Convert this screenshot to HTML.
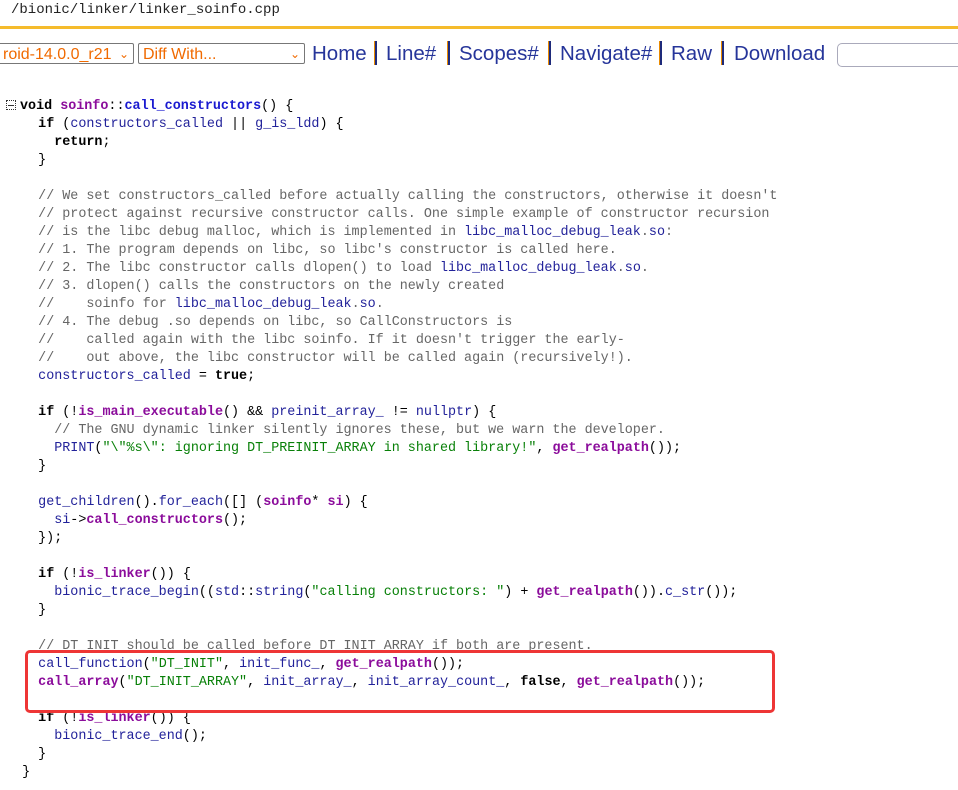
<!DOCTYPE html>
<html><head><meta charset="utf-8"><style>
body{margin:0;background:#fff;width:958px;height:790px;overflow:hidden;position:relative;font-family:"Liberation Sans",sans-serif}
.path{position:absolute;left:11px;top:2px;font:14px "Liberation Mono",monospace;color:#222}
.bar{position:absolute;left:0;right:0;top:26px;height:3px;background:#f5bb2c}
.sel{position:absolute;top:43px;height:21px;border:1px solid #777;border-radius:2px;color:#f06a00;font-size:16px;line-height:21px;box-sizing:border-box;padding-left:4px;background:#fff}
.sel b{position:absolute;right:4px;top:0;font-weight:normal;font-size:12px}
.n{position:absolute;top:42px;font-size:20.5px;color:#26359a;white-space:nowrap}
.sep{position:absolute;top:41px;width:2px;height:24px;background:#1e2a7a;border-left:1px solid #e98a00}
.search{position:absolute;left:837px;top:43px;width:140px;height:22px;border:1px solid #aab;border-radius:5px}
pre{position:absolute;left:6px;top:98px;margin:0;font:13.4px/18px "Liberation Mono",monospace;color:#000}
.i{color:#22229a}.k{font-weight:bold}.f{color:#8b0c9b;font-weight:bold}.c{color:#666}.s{color:#088008}
.fold{display:inline-block;width:10px;height:10px;border:1px dotted #333;position:relative;box-sizing:border-box;margin-right:4px;vertical-align:-1px}
.fold:after{content:"";position:absolute;left:1px;right:1px;top:4px;height:1px;background:#333}
.box{position:absolute;left:25px;top:650px;width:750px;height:63px;border:3px solid #ee3535;border-radius:5px;box-sizing:border-box}
</style></head><body>
<div class="path">/bionic/linker/linker_soinfo.cpp</div>
<div class="bar"></div>
<div class="sel" style="left:-2px;width:136px">roid-14.0.0_r21<b>&#8964;</b></div>
<div class="sel" style="left:138px;width:167px">Diff With...<b>&#8964;</b></div>
<span class="n" style="left:312px">Home</span><span class="sep" style="left:374px"></span>
<span class="n" style="left:386px">Line#</span><span class="sep" style="left:447px"></span>
<span class="n" style="left:459px">Scopes#</span><span class="sep" style="left:548px"></span>
<span class="n" style="left:560px">Navigate#</span><span class="sep" style="left:659px"></span>
<span class="n" style="left:671px">Raw</span><span class="sep" style="left:721px"></span>
<span class="n" style="left:734px">Download</span>
<div class="search"></div>
<pre><span class="fold"></span><span class="k">void</span> <span class="f">soinfo</span>::<span class="i" style="font-weight:bold;color:#1a1ad0">call_constructors</span>() {
    <span class="k">if</span> (<span class="i">constructors_called</span> || <span class="i">g_is_ldd</span>) {
      <span class="k">return</span>;
    }

    <span class="c">// We set constructors_called before actually calling the constructors, otherwise it doesn't</span>
    <span class="c">// protect against recursive constructor calls. One simple example of constructor recursion</span>
    <span class="c">// is the libc debug malloc, which is implemented in </span><span class="i">libc_malloc_debug_leak</span><span class="c">.</span><span class="i">so</span><span class="c">:</span>
    <span class="c">// 1. The program depends on libc, so libc's constructor is called here.</span>
    <span class="c">// 2. The libc constructor calls dlopen() to load </span><span class="i">libc_malloc_debug_leak</span><span class="c">.</span><span class="i">so</span><span class="c">.</span>
    <span class="c">// 3. dlopen() calls the constructors on the newly created</span>
    <span class="c">//    soinfo for </span><span class="i">libc_malloc_debug_leak</span><span class="c">.</span><span class="i">so</span><span class="c">.</span>
    <span class="c">// 4. The debug .so depends on libc, so CallConstructors is</span>
    <span class="c">//    called again with the libc soinfo. If it doesn't trigger the early-</span>
    <span class="c">//    out above, the libc constructor will be called again (recursively!).</span>
    <span class="i">constructors_called</span> = <span class="k">true</span>;

    <span class="k">if</span> (!<span class="f">is_main_executable</span>() &amp;&amp; <span class="i">preinit_array_</span> != <span class="i">nullptr</span>) {
      <span class="c">// The GNU dynamic linker silently ignores these, but we warn the developer.</span>
      <span class="i">PRINT</span>(<span class="s">"\"%s\": ignoring DT_PREINIT_ARRAY in shared library!"</span>, <span class="f">get_realpath</span>());
    }

    <span class="i">get_children</span>().<span class="i">for_each</span>([] (<span class="f">soinfo</span>* <span class="f">si</span>) {
      <span class="i">si</span>-&gt;<span class="f">call_constructors</span>();
    });

    <span class="k">if</span> (!<span class="f">is_linker</span>()) {
      <span class="i">bionic_trace_begin</span>((<span class="i">std</span>::<span class="i">string</span>(<span class="s">"calling constructors: "</span>) + <span class="f">get_realpath</span>()).<span class="i">c_str</span>());
    }

    <span class="c">// DT_INIT should be called before DT_INIT_ARRAY if both are present.</span>
    <span class="i">call_function</span>(<span class="s">"DT_INIT"</span>, <span class="i">init_func_</span>, <span class="f">get_realpath</span>());
    <span class="f">call_array</span>(<span class="s">"DT_INIT_ARRAY"</span>, <span class="i">init_array_</span>, <span class="i">init_array_count_</span>, <span class="k">false</span>, <span class="f">get_realpath</span>());

    <span class="k">if</span> (!<span class="f">is_linker</span>()) {
      <span class="i">bionic_trace_end</span>();
    }
  }</pre>
<div class="box"></div>
</body></html>
